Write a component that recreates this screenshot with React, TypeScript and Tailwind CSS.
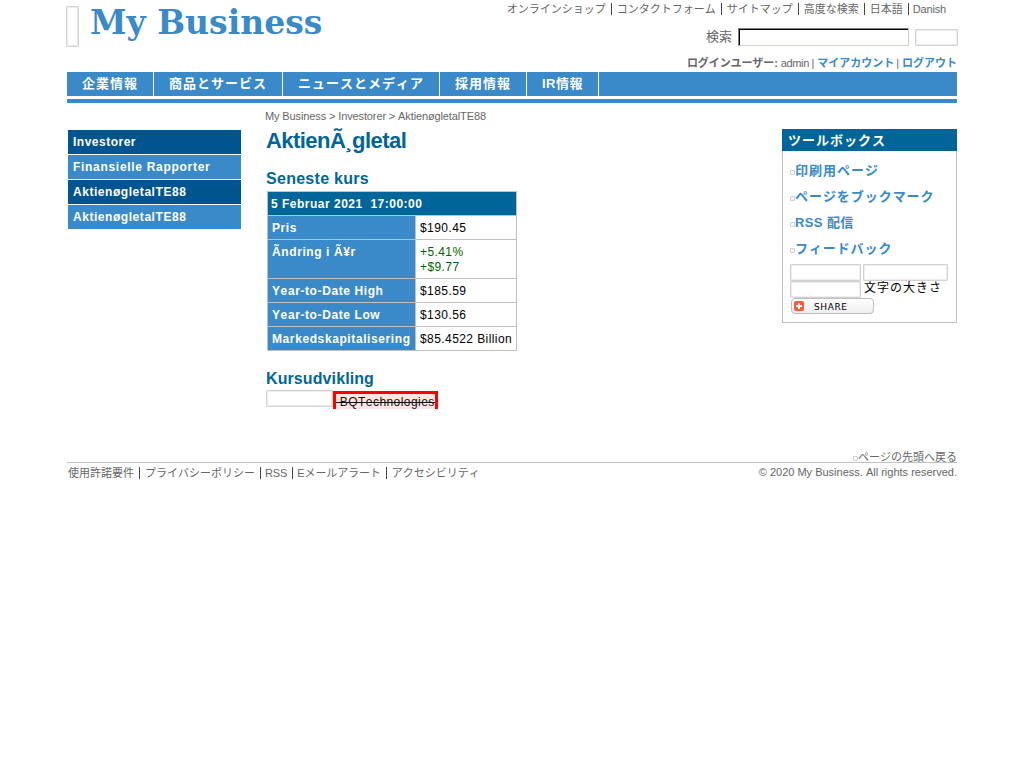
import React from "react";

const topLinks = ["オンラインショップ", "コンタクトフォーム", "サイトマップ", "高度な検索", "日本語", "Danish"];
const navItems = [
  { label: "企業情報", cls: "w-[87px]" },
  { label: "商品とサービス", cls: "w-[129px]" },
  { label: "ニュースとメディア", cls: "w-[157px]" },
  { label: "採用情報", cls: "w-[87px]" },
  { label: "IR情報", cls: "w-[72px] tracking-[0.5px]" },
];
const footerLinks = ["使用許諾要件", "プライバシーポリシー", "RSS", "Eメールアラート", "アクセシビリティ"];

const sideItems = [
  { label: "Investorer", cls: "bg-[#005590] tracking-[0.5px]" },
  { label: "Finansielle Rapporter", cls: "bg-[#3a8aca] tracking-[0.7px]" },
  { label: "AktienøgletalTE88", cls: "bg-[#005590] tracking-[0.55px]" },
  { label: "AktienøgletalTE88", cls: "bg-[#3a8aca] tracking-[0.55px]" },
];

const rows = [
  { label: "Pris", value: ["$190.45"] },
  { label: "Ãndring i Ã¥r", value: ["+5.41%", "+$9.77"], up: true },
  { label: "Year-to-Date High", value: ["$185.59"] },
  { label: "Year-to-Date Low", value: ["$130.56"] },
  { label: "Markedskapitalisering", value: ["$85.4522 Billion"] },
];

const tools = [
  { label: "印刷用ページ", cls: "tracking-[1px]" },
  { label: "ページをブックマーク", cls: "tracking-[0.95px]" },
  { label: "RSS 配信", cls: "tracking-[0.4px]" },
  { label: "フィードバック", cls: "tracking-[0.9px]" },
];

function Blank({ className }: { className: string }) {
  return (
    <span
      className={`block shrink-0 rounded-[1px] border border-[#d2d2d2] bg-white shadow-[inset_0_0_0_1px_#eeeeee] ${className}`}
    />
  );
}

function Bullet() {
  return <span className="block h-[5px] w-[5px] shrink-0 rounded-[1px] border border-[#cfcfcf]" />;
}

function Divided({ items }: { items: string[] }) {
  return (
    <>
      {items.map((t, i) => (
        <React.Fragment key={t}>
          {i > 0 && (
            <span
              className={`block h-3 w-px shrink-0 bg-[#444] ml-[5px] ${/^[A-Z]/.test(t) ? "mr-1" : "mr-[5px]"}`}
            />
          )}
          <span className={t === "Danish" ? "tracking-[-0.15px]" : t === "RSS" ? "tracking-[-0.1px]" : t.startsWith("E") ? "tracking-[-0.12px]" : ""}>{t}</span>
        </React.Fragment>
      ))}
    </>
  );
}

export default function App() {
  return (
    <div className="h-[768px] w-[1024px] overflow-hidden bg-white text-[#666] [font-kerning:none] [font-family:'Liberation_Sans','Noto_Sans_CJK_JP',sans-serif]">
      <div className="ml-[67px] w-[890px]">
        <header className="flex h-[72px] justify-between">
          <div className="flex">
            <Blank className="-ml-px mt-[6px] h-[41px] w-[13px]" />
            <h1 className="ml-[11px] mt-[2px] h-[42px] whitespace-nowrap text-[33px] leading-[42px] font-bold text-[#3a8aca] [font-family:'DejaVu_Serif',serif]">
              My Business
            </h1>
          </div>
          <div className="flex flex-col items-end whitespace-nowrap text-[11px]">
            <div className="mr-[11px] mt-[3px] flex h-3 items-center leading-3">
              <Divided items={topLinks} />
            </div>
            <div className="-mr-px mt-[13px] flex h-[18px] items-center">
              <label htmlFor="search" className="mr-[6px] text-[13px] leading-[18px]">検索</label>
              <input
                id="search"
                className="block h-[18px] w-[171px] border border-t-[#808080] border-l-[#808080] border-r-[#d4d0c8] border-b-[#d4d0c8] bg-white shadow-[inset_1px_1px_0_#000] outline-none"
              />
              <Blank className="ml-[6px] h-[17px] w-[43px]" />
            </div>
            <div className="mt-[9px] flex h-4 items-center leading-4">
              <b className="tracking-[-0.1px]">ログインユーザー:</b>
              <span className="ml-[3px] tracking-[-0.35px]">admin |</span>
              <b className="ml-[3px] text-[#3a8aca]">マイアカウント</b>
              <span className="ml-[2px] mr-[3px]">|</span>
              <b className="text-[#3a8aca]">ログアウト</b>
            </div>
          </div>
        </header>

        <nav className="flex h-6 bg-[#3a8aca] text-[13px] leading-6 font-bold tracking-[1px] whitespace-nowrap text-white">
          {navItems.map((n) => (
            <span key={n.label} className={`border-r border-white pl-[15px] ${n.cls}`}>{n.label}</span>
          ))}
        </nav>
        <div className="mt-[3px] h-1 bg-[#3a8aca]" />

        <main className="flex h-[359px] items-start">
          <aside className="ml-px mt-[27px] flex w-[173px] flex-col gap-px whitespace-nowrap text-[12px] leading-6 font-bold text-white">
            {sideItems.map((s, i) => (
              <span key={i} className={`block h-6 pl-[5px] ${s.cls}`}>{s.label}</span>
            ))}
          </aside>

          <section className="ml-[25px] whitespace-nowrap">
            <div className="-ml-px mt-[5px] h-4 text-[11px] leading-4 tracking-[-0.12px]">
              My Business &gt; Investorer &gt; AktienøgletalTE88
            </div>
            <h2 className="mt-[3px] h-[28px] text-[22px] leading-[28px] font-bold tracking-[-0.55px] text-[#006699]">AktienÃ¸gletal</h2>
            <h3 className="mt-[14px] h-5 text-[16px] leading-5 font-bold tracking-[0.28px] text-[#006699]">Seneste kurs</h3>
            <table className="ml-px mt-[2px] w-[250px] table-fixed border-collapse text-[12px] leading-[15px] tracking-[0.42px]">
              <colgroup>
                <col className="w-[148px]" />
                <col />
              </colgroup>
              <thead>
                <tr>
                  <th colSpan={2} className="h-6 border border-[#c0c0c0] bg-[#006699] p-0 pt-px pl-[3px] text-left tracking-[0.5px] whitespace-pre text-white">
                    {"5 Februar 2021  17:00:00"}
                  </th>
                </tr>
              </thead>
              <tbody>
                {rows.map((r) => (
                  <tr key={r.label}>
                    <th className="border border-[#c0c0c0] bg-[#3a8aca] pt-[5px] pb-[3px] pr-0 pl-1 text-left align-top tracking-[0.6px] text-white">
                      {r.label}
                    </th>
                    <td className={`border border-[#c0c0c0] pt-[5px] pb-[3px] pr-0 pl-1 align-top ${r.up ? "text-[#006600]" : "text-black"}`}>
                      {r.value.map((v) => (
                        <div key={v}>{v}</div>
                      ))}
                    </td>
                  </tr>
                ))}
              </tbody>
            </table>
            <h3 className="mt-[18px] h-5 text-[16px] leading-5 font-bold tracking-[0.1px] text-[#006699]">Kursudvikling</h3>
            <div className="mt-px flex h-[19px] items-start overflow-hidden">
              <Blank className="h-[17px] w-[67px]" />
              <div className="mt-px h-6 w-[105px] border-[3px] border-[#ff0000] bg-[#ffe5e5] text-[12px] leading-[16px] tracking-[0.45px] whitespace-pre text-[#111] line-through">
                {" BQTechnologies"}
              </div>
            </div>
          </section>

          <aside className="ml-auto mt-[26px] h-[194px] w-[175px] border border-[#c0c0c0] border-t-0 whitespace-nowrap">
            <h2 className="-mx-px h-[22px] bg-[#006699] pl-[6px] text-[13px] leading-[23px] font-bold tracking-[1px] text-white">
              ツールボックス
            </h2>
            <div className="mt-[7px] ml-[7px] flex flex-col">
              {tools.map((t) => (
                <div key={t.label} className="flex h-[26px] items-center text-[13px] leading-[26px] font-bold text-[#3a8aca]">
                  <span className="mt-[3px]"><Bullet /></span>
                  <span className={t.cls}>{t.label}</span>
                </div>
              ))}
            </div>
            <div className="ml-[7px] mt-[2px] grid w-[160px] grid-cols-[71px_85px] gap-x-[2px]">
              <Blank className="h-[17px]" />
              <Blank className="h-[17px]" />
              <Blank className="h-[17px]" />
              <span className="h-[17px] pl-px text-[12px] leading-[15px] tracking-[1px] text-black">文字の大きさ</span>
            </div>
            <button className="ml-2 flex h-4 w-[83px] items-center rounded-[4px] border border-[#bdbdbd] bg-linear-to-b from-white to-[#eeeeee] p-0">
              <svg viewBox="0 0 10 10" className="ml-[2px] h-[10px] w-[10px]">
                <rect width="10" height="10" rx="2" fill="#ff5c36" />
                <path d="M4 2h2v2h2v2H6v2H4V6H2V4h2z" fill="white" />
              </svg>
              <span className="ml-[10px] mt-px text-[9px] leading-3 tracking-[0.6px] text-black [font-family:'DejaVu_Sans',sans-serif]">SHARE</span>
            </button>
          </aside>
        </main>

        <footer className="text-[11px] whitespace-nowrap">
          <div className="-mt-3 flex h-3 items-center justify-end leading-3">
            <span className="mt-[5px]"><Bullet /></span>
            <span className="mt-[2px]">ページの先頭へ戻る</span>
          </div>
          <div className="flex justify-between border-t border-[#c0c0c0]">
            <div className="ml-px mt-[4px] flex h-3 items-center leading-[13px]">
              <Divided items={footerLinks} />
            </div>
            <div className="mt-[3px] h-3 leading-3">© 2020 My Business. All rights reserved.</div>
          </div>
        </footer>
      </div>
    </div>
  );
}
